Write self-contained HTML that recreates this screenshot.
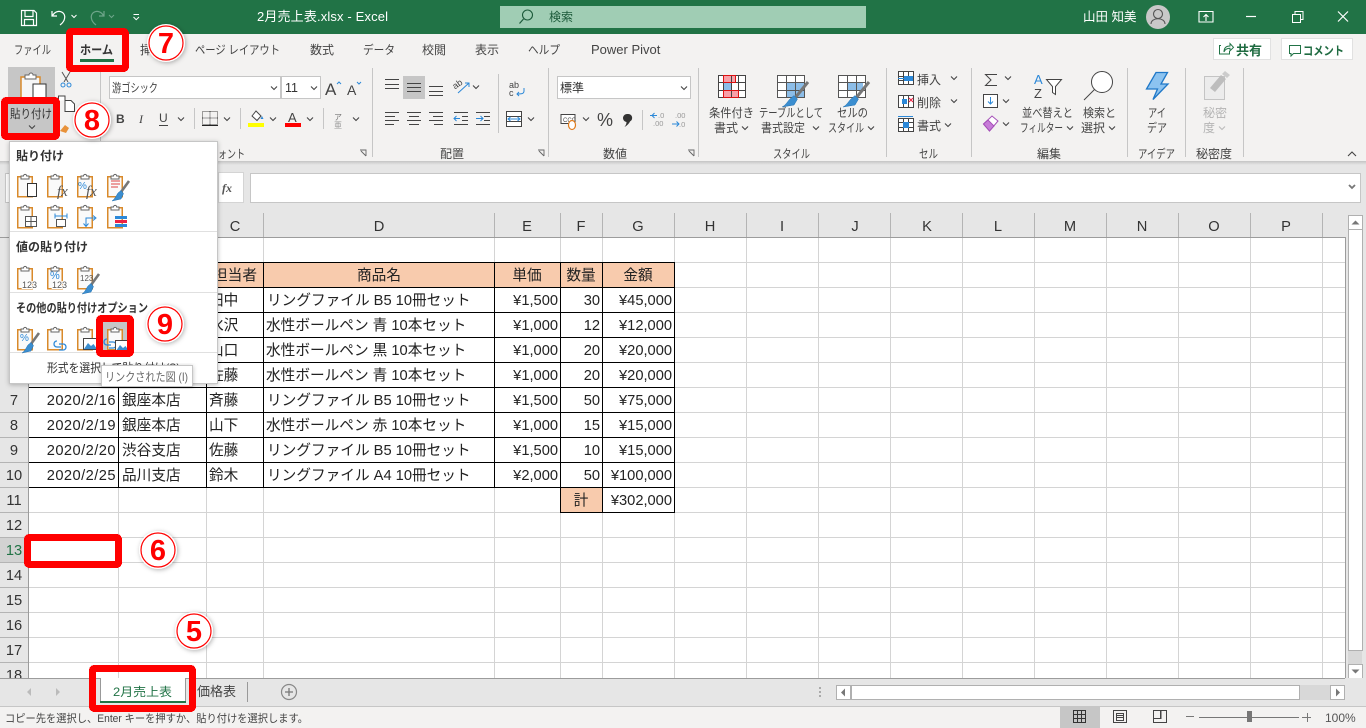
<!DOCTYPE html>
<html lang="ja"><head><meta charset="utf-8"><title>2月売上表.xlsx - Excel</title>
<style>
html,body{margin:0;padding:0;width:1366px;height:728px;overflow:hidden;background:#fff}
svg{display:block;font-family:"Liberation Sans","Noto Sans CJK JP",sans-serif}
.c{shape-rendering:crispEdges}
.r{font-size:12px;fill:#444}
.d{font-size:14.67px;fill:#222}
.h{font-size:14.67px;fill:#333;text-anchor:middle}
.m{text-anchor:middle}
.e{text-anchor:end}
.dt{letter-spacing:.45px}
.b{font-weight:700;font-size:12px;fill:#333}
.n{font-weight:700;font-size:29px;fill:#f00;text-anchor:middle;font-family:"Liberation Sans",sans-serif}
</style></head><body>
<svg width="1366" height="728" viewBox="0 0 1366 728" xmlns="http://www.w3.org/2000/svg">
<defs>
<filter id="sh" x="-30%" y="-30%" width="160%" height="160%"><feDropShadow dx="1" dy="1" stdDeviation="2.5" flood-color="#000" flood-opacity=".3"/></filter>
<filter id="ms" x="-10%" y="-10%" width="120%" height="120%"><feDropShadow dx="0" dy="1" stdDeviation="2.5" flood-color="#000" flood-opacity=".25"/></filter>
<linearGradient id="rs" x1="0" y1="0" x2="0" y2="1"><stop offset="0" stop-color="#c4c4c4"/><stop offset="1" stop-color="#e6e6e6"/></linearGradient>
<path id="ch" d="M-3-1.500 0 1.500 3-1.500" fill="none" stroke="#444" stroke-width="1.100"/>
<path id="lg" d="M-3-1.500 0 1.500 3-1.500" fill="none" stroke="#bbb" stroke-width="1.100"/>
<g id="cb"><rect x=".75" y="3.750" width="14.500" height="20" fill="#fafafa" stroke="#d98a2b" stroke-width="1.500"/><path d="M4 6V3h2.500a1.600 1.600 0 0 1 3.200 0H12v3z" fill="#fff" stroke="#666"/></g>
<g id="br"><path d="M13-6 5 5" stroke="#777" stroke-width="2.600" fill="none"/><path d="M2 6 5 3.500 7.500 6.500 5 12-4 14C-1 12 0 9 2 6z" fill="#3b8ed0" stroke="#1f6fb0" stroke-width=".5"/></g>
<g id="bl"><path d="M20-14 7 2" stroke="#777" stroke-width="3" fill="none"/><path d="M2 3 6-.5 9.500 3 6 9-6 11C-2 9 -1 6 2 3z" fill="#3b8ed0" stroke="#1f6fb0" stroke-width=".5"/></g>
<g id="pic"><rect x=".5" y=".5" width="14" height="11" fill="#fff" stroke="#444"/><path d="M1 11 5 5 8 8 10.500 6 14 11z" fill="#3b8ed0"/></g>
<g id="lk"><path d="M3 0C-1 0-1 6 3 6H7M5 9h4c4 0 4-6 0-6H5" fill="none" stroke="#2b88d8" stroke-width="1.300"/></g>
<g id="nm"><circle r="19" fill="#fff" filter="url(#sh)"/><circle r="17" fill="none" stroke="#f00" stroke-width="1.200"/></g>
</defs>

<!-- sheet -->
<rect width="1366" height="728" fill="#fff"/>
<path class="c" d="M28 262.500H1345M28 287.500H1345M28 312.500H1345M28 337.500H1345M28 362.500H1345M28 387.500H1345M28 412.500H1345M28 437.500H1345M28 462.500H1345M28 487.500H1345M28 512.500H1345M28 537.500H1345M28 562.500H1345M28 587.500H1345M28 612.500H1345M28 637.500H1345M28 662.500H1345M118.500 237V680M206.500 237V680M263.500 237V680M494.500 237V680M560.500 237V680M602.500 237V680M674.500 237V680M746.500 237V680M818.500 237V680M890.500 237V680M962.500 237V680M1034.500 237V680M1106.500 237V680M1178.500 237V680M1250.500 237V680M1322.500 237V680" stroke="#d4d4d4" fill="none"/>
<rect class="c" x="28" y="262" width="647" height="25" fill="#f8cbad"/>
<rect class="c" x="560" y="487" width="42" height="25" fill="#f8cbad"/>
<path class="c" d="M28 262.500H674.500M28 287.500H674.500M28 312.500H674.500M28 337.500H674.500M28 362.500H674.500M28 387.500H674.500M28 412.500H674.500M28 437.500H674.500M28 462.500H674.500M28 487.500H674.500M560 512.500H675M118.500 262V487M206.500 262V487M263.500 262V487M494.500 262V487M560.500 262V512M602.500 262V512M674.500 262V512" stroke="#000" fill="none"/>

<g class="d">
<text class="m" x="235" y="280">担当者</text><text class="m" x="379" y="280">商品名</text><text class="m" x="527" y="280">単価</text><text class="m" x="581" y="280">数量</text><text class="m" x="638" y="280">金額</text>
<text x="209" y="305">田中</text><text x="267" y="305">リングファイル B5 10冊セット</text><text class="e" x="558" y="305">¥1,500</text><text class="e" x="600" y="305">30</text><text class="e" x="672" y="305">¥45,000</text>
<text x="209" y="330">水沢</text><text x="266" y="330">水性ボールペン 青 10本セット</text><text class="e" x="558" y="330">¥1,000</text><text class="e" x="600" y="330">12</text><text class="e" x="672" y="330">¥12,000</text>
<text x="209" y="355">山口</text><text x="266" y="355">水性ボールペン 黒 10本セット</text><text class="e" x="558" y="355">¥1,000</text><text class="e" x="600" y="355">20</text><text class="e" x="672" y="355">¥20,000</text>
<text x="209" y="380">佐藤</text><text x="266" y="380">水性ボールペン 青 10本セット</text><text class="e" x="558" y="380">¥1,000</text><text class="e" x="600" y="380">20</text><text class="e" x="672" y="380">¥20,000</text>
<text class="e dt" x="116" y="405">2020/2/16</text><text x="122" y="405">銀座本店</text><text x="209" y="405">斉藤</text><text x="267" y="405">リングファイル B5 10冊セット</text><text class="e" x="558" y="405">¥1,500</text><text class="e" x="600" y="405">50</text><text class="e" x="672" y="405">¥75,000</text>
<text class="e dt" x="116" y="430">2020/2/19</text><text x="122" y="430">銀座本店</text><text x="209" y="430">山下</text><text x="266" y="430">水性ボールペン 赤 10本セット</text><text class="e" x="558" y="430">¥1,000</text><text class="e" x="600" y="430">15</text><text class="e" x="672" y="430">¥15,000</text>
<text class="e dt" x="116" y="455">2020/2/20</text><text x="122" y="455">渋谷支店</text><text x="209" y="455">佐藤</text><text x="267" y="455">リングファイル B5 10冊セット</text><text class="e" x="558" y="455">¥1,500</text><text class="e" x="600" y="455">10</text><text class="e" x="672" y="455">¥15,000</text>
<text class="e dt" x="116" y="480">2020/2/25</text><text x="122" y="480">品川支店</text><text x="209" y="480">鈴木</text><text x="267" y="480">リングファイル A4 10冊セット</text><text class="e" x="558" y="480">¥2,000</text><text class="e" x="600" y="480">50</text><text class="e" x="672" y="480">¥100,000</text>
<text class="m" x="581" y="505">計</text><text class="e" x="672" y="505">¥302,000</text>
</g>

<!-- headers -->
<rect class="c" x="0" y="161" width="1366" height="76" fill="#e6e6e6"/>
<rect class="c" x="1345" y="237" width="21" height="443" fill="#e6e6e6"/>
<rect class="c" x="0" y="237" width="28" height="443" fill="#e6e6e6"/>
<rect class="c" x="0" y="537" width="28" height="25" fill="#d2d2d2"/>
<path class="c" d="M0 412.500H28M0 437.500H28M0 462.500H28M0 487.500H28M0 512.500H28M0 537.500H28M0 562.500H28M0 587.500H28M0 612.500H28M0 637.500H28M0 662.500H28M206.500 213V237M263.500 213V237M494.500 213V237M560.500 213V237M602.500 213V237M674.500 213V237M746.500 213V237M818.500 213V237M890.500 213V237M962.500 213V237M1034.500 213V237M1106.500 213V237M1178.500 213V237M1250.500 213V237M1322.500 213V237" stroke="#b4b4b4" fill="none"/>
<path class="c" d="M0 237.500H1345.500V680M28.500 237V680" stroke="#9c9c9c" fill="none"/>
<g class="h">
<text x="235" y="231">C</text><text x="379" y="231">D</text><text x="527" y="231">E</text><text x="581" y="231">F</text><text x="638" y="231">G</text><text x="710" y="231">H</text><text x="782" y="231">I</text><text x="855" y="231">J</text><text x="927" y="231">K</text><text x="998" y="231">L</text><text x="1070" y="231">M</text><text x="1142" y="231">N</text><text x="1214" y="231">O</text><text x="1286" y="231">P</text>
<text x="14" y="405">7</text><text x="14" y="430">8</text><text x="14" y="455">9</text><text x="14" y="480">10</text><text x="14" y="505">11</text><text x="14" y="530">12</text><text x="14" y="555" style="fill:#217346">13</text><text x="14" y="580">14</text><text x="14" y="605">15</text><text x="14" y="630">16</text><text x="14" y="655">17</text><text x="14" y="680">18</text>
</g>

<!-- vertical scrollbar -->
<rect class="c" x="1348" y="650" width="14" height="14" fill="#d8d8d8"/>
<rect class="c" x="1348.500" y="229.500" width="14" height="421" fill="#fff" stroke="#b0b0b0"/>
<rect class="c" x="1348.500" y="215.500" width="14" height="14" fill="#fff" stroke="#b0b0b0"/>
<rect class="c" x="1348.500" y="664.500" width="14" height="14" fill="#fff" stroke="#b0b0b0"/>
<path d="M1355.500 220.500 1351.500 224.500H1359.500zM1355.500 673.500 1351.500 669.500H1359.500z" fill="#777"/>

<!-- formula bar -->
<rect class="c" x="5.500" y="173.500" width="211" height="29" fill="#fff" stroke="#c6c6c6"/>
<rect class="c" x="218.500" y="172.500" width="25" height="30" fill="#fff" stroke="#d4d4d4"/>
<text x="222" y="192" style="font:italic 700 12px 'Liberation Serif',serif;fill:#555">fx</text>
<rect class="c" x="250.500" y="173.500" width="1110" height="29" fill="#fff" stroke="#c6c6c6"/>
<path d="M1349 185l3 3 3-3" fill="none" stroke="#777" stroke-width="1.800"/>

<!-- title bar -->
<rect class="c" width="1366" height="34" fill="#217346"/>
<g fill="none" stroke="#fff" stroke-width="1.200">
<path d="M21.500 10.500H34L36.500 13V25.500H21.500zM25 10.500V16.500H33V10.500M24.500 25.500V19.500H33.500V25.500"/>
<path d="M52 11V16H57M52.500 16C54 12 59 10 62.500 12.500C66 15 65.500 21 60 25"/>
<path d="M71.500 15l2.500 2.500L76.500 15" stroke-width="1"/>
<path d="M133.500 14.500H139M133.500 17l2.700 2.700L139 17" stroke-width="1"/>
<path d="M1199 11.500h14v10.500h-14zM1206 21v-6M1203.500 17l2.500-2.500 2.500 2.500" stroke-width="1.100"/>
<path d="M1246 16.500h10"/>
<path d="M1292.500 14.500h8v8h-8zM1295 14v-2.500h8v8h-2.500" stroke-width="1"/>
<path d="M1338 11.500 1348 21.500M1348 11.500 1338 21.500"/>
</g>
<g fill="none" stroke="#6ea58a" stroke-width="1.200"><path d="M104 11V16H99M103.500 16C102 12 97 10 93.500 12.500C90 15 90.500 21 96 25"/><path d="M109 15l2.500 2.500L114 15" stroke-width="1"/></g>
<text x="257" y="21" textLength="131" style="font-size:13px;fill:#fff">2月売上表.xlsx  -  Excel</text>
<rect class="c" x="500" y="6" width="366" height="22" fill="#a0cdb4"/>
<circle cx="527.500" cy="15" r="5" fill="none" stroke="#1c5a3a" stroke-width="1.100"/><path d="M523.500 19 519.500 23.500" stroke="#1c5a3a" stroke-width="1.200"/>
<text x="549" y="21" style="font-size:12px;fill:#1c5a3a">検索</text>
<text x="1083" y="21" style="font-size:12.500px;fill:#fff">山田 知美</text>
<circle cx="1158" cy="17" r="12" fill="#c8c8c8"/><circle cx="1158" cy="14" r="4.500" fill="none" stroke="#555" stroke-width="1.100"/><path d="M1151 24c0-7 14-7 14 0" fill="none" stroke="#555" stroke-width="1.100"/>

<!-- ribbon -->
<rect class="c" y="34" width="1366" height="127" fill="#f3f2f1"/>
<rect class="c" y="161" width="1366" height="4" fill="url(#rs)"/>
<g class="r">
<text x="14" y="54" textLength="37" lengthAdjust="spacingAndGlyphs">ファイル</text>
<text x="80" y="54" textLength="33" lengthAdjust="spacingAndGlyphs" style="font-weight:700;fill:#333">ホーム</text>
<text x="140" y="54">挿入</text>
<text x="195" y="54" textLength="85" lengthAdjust="spacingAndGlyphs">ページ レイアウト</text>
<text x="310" y="54">数式</text>
<text x="363" y="54" textLength="32" lengthAdjust="spacingAndGlyphs">データ</text>
<text x="422" y="54">校閲</text><text x="475" y="54">表示</text>
<text x="528" y="54" textLength="32" lengthAdjust="spacingAndGlyphs">ヘルプ</text>
<text x="591" y="54" style="font-size:13px">Power Pivot</text>
</g>
<rect class="c" x="80" y="59" width="34" height="3" fill="#217346"/>

<rect class="c" x="1213.500" y="38.500" width="57" height="21" fill="#fff" stroke="#e1e1e1"/>
<rect class="c" x="1281.500" y="38.500" width="71" height="21" fill="#fff" stroke="#e1e1e1"/>
<path d="M1221 45.500h-1.500v8.500h10v-3M1224 52c0-4 2-6 6-6v-2.500l3.500 3.800-3.500 3.500v-2.500c-3 0-5 1-6 3.700z" fill="none" stroke="#217346"/>
<path d="M1289.500 45.500h11v8h-7l-2.500 2.500v-2.500h-1.500z" fill="none" stroke="#217346"/>
<text x="1236" y="55" style="font-weight:700;font-size:13px;fill:#1f6b41">共有</text>
<text x="1303" y="55" textLength="41" lengthAdjust="spacingAndGlyphs" style="font-weight:700;font-size:12px;fill:#1f6b41">コメント</text>

<!-- ribbon separators -->
<path class="c" d="M100.500 68V157M372.500 68V157M548.500 68V157M698.500 68V157M886.500 68V157M971.500 68V157M1127.500 68V157M1185.500 68V157M1243.500 68V157M498.500 74V133M642.500 110V130M194.500 108V129M240.500 108V129M323.500 108V129" stroke="#c6c6c6" fill="none"/>

<!-- clipboard group -->
<rect class="c" x="8" y="67" width="47" height="32" fill="#c6c6c6"/>
<rect x="21" y="77" width="19" height="24" fill="#f6f6f6" stroke="#d98a2b" stroke-width="1.500"/>
<path d="M25 79V75h4a2 2 0 0 1 4 0h3v4z" fill="#fff" stroke="#666"/>
<rect x="33" y="84" width="13" height="16" fill="#fff" stroke="#333"/>
<path d="M62 72 68 82M70 72 64 82" stroke="#555" fill="none"/><circle cx="63" cy="85" r="2" fill="none" stroke="#2b88d8"/><circle cx="69" cy="85" r="2" fill="none" stroke="#2b88d8"/>
<path d="M58.500 101V96h6.500v4M65 100.500h6l3.500 3.500v7.500H65z" fill="#fff" stroke="#444"/>
<path d="M60 131l5-6 4 3-3 5z" fill="#e8923a"/>
<rect class="c" x="8" y="104" width="45" height="29" fill="#c6c6c6"/>
<text x="10" y="118" textLength="42" lengthAdjust="spacingAndGlyphs" style="font-size:12px;fill:#333">貼り付け</text>
<use href="#ch" x="32" y="127"/>

<!-- font -->
<rect class="c" x="109.500" y="76.500" width="171" height="22" fill="#fff" stroke="#c6c6c6"/>
<rect class="c" x="281.500" y="76.500" width="39" height="22" fill="#fff" stroke="#c6c6c6"/>
<text x="112" y="92" textLength="46" lengthAdjust="spacingAndGlyphs" class="r">游ゴシック</text>
<text x="285" y="92" style="font-size:12.500px;fill:#333">11</text>
<use href="#ch" x="274" y="88"/><use href="#ch" x="314" y="88"/>
<text x="325" y="95" style="font-size:17px;fill:#444">A</text><path d="M337 84l2-2 2 2" fill="none" stroke="#2b88d8"/>
<text x="347" y="95" style="font-size:14px;fill:#444">A</text><path d="M357 82l2 2 2-2" fill="none" stroke="#2b88d8"/>
<text x="116" y="123" style="font-size:12px;font-weight:700;fill:#444">B</text>
<text x="139" y="123" style="font:italic 12px 'Liberation Serif',serif;fill:#444">I</text>
<text x="159" y="122" style="font-size:12px;fill:#444">U</text><path class="c" d="M159 125.500h9" stroke="#444"/>
<use href="#ch" x="181" y="119"/>
<path d="M202.500 111.500h15v13h-15zM210 111.500v13M202.500 118h15" fill="none" stroke="#444" stroke-dasharray="1 1"/><path class="c" d="M202 125.500h16" stroke="#222"/>
<use href="#ch" x="227" y="119"/>
<path d="M252 116l4-5 5 5-4 4.500z" fill="#fff" stroke="#444"/><path d="M262 116l1.500 3h-3z" fill="#2b88d8"/><rect class="c" x="248" y="123" width="16" height="4" fill="#ff0"/>
<use href="#ch" x="273" y="119"/>
<text x="288" y="122" style="font-size:13px;fill:#444">A</text><rect class="c" x="285" y="123" width="16" height="4" fill="#f00"/>
<use href="#ch" x="310" y="119"/>
<text x="334" y="120" style="font-size:8px;fill:#777">ア</text><text x="334" y="128" style="font-size:8px;fill:#999">亜</text>
<use href="#ch" x="356" y="119"/>
<text x="218" y="158" class="r" textLength="27" lengthAdjust="spacingAndGlyphs">ォント</text>
<path d="M360 150h6v6M361 151l5 5" fill="none" stroke="#666" stroke-width=".9"/>

<!-- alignment -->
<rect class="c" x="403" y="76" width="22" height="23" fill="#c6c6c6"/>
<path class="c" d="M385 79.500H399M385 84.500H399M385 88.500H399M407 83.500H421M407 87.500H421M407 91.500H421M429 86.500H443M429 91.500H443M429 95.500H443" stroke="#444" fill="none"/>
<text x="453" y="87" style="font-size:9px;fill:#444" transform="rotate(-35 458 85)">ab</text><path d="M458 93 469 83M465 83h4v4" fill="none" stroke="#2b88d8"/>
<use href="#ch" x="476" y="87"/>
<path d="M385 112.500H399M385 116.500H395M385 120.500H399M385 124.500H394M407 112.500H421M409 116.500H419M407 120.500H421M409 124.500H419M429 112.500H443M433 116.500H443M429 120.500H443M434 124.500H443M454 112.500H468M462 116.500H468M462 120.500H468M454 124.500H468M476 112.500H490M484 116.500H490M484 120.500H490M476 124.500H490" stroke="#444" fill="none" class="c"/>
<path d="M460 118.500h-6m2.500-2.500-2.500 2.500 2.500 2.500M476 118.500h7m-2.500-2.500 2.500 2.500-2.500 2.500" fill="none" stroke="#2b88d8"/>
<text x="509" y="88" style="font-size:9px;fill:#444">ab</text><text x="509" y="96" style="font-size:9px;fill:#444">c</text><path d="M524 88v3c0 3-3 3-7 3m2-2-2 2 2 2" fill="none" stroke="#2b88d8"/>
<path class="c" d="M506.500 111.500h15v15h-15zM506.500 116.500h15M506.500 121.500h15" fill="#fff" stroke="#444"/><path d="M508 119h12m-9.500-2-2.500 2 2.500 2m7-4 2.500 2-2.500 2" fill="none" stroke="#2b88d8"/>
<use href="#ch" x="531" y="119"/>
<text x="440" y="158" class="r">配置</text>
<path d="M538 150h6v6M539 151l5 5" fill="none" stroke="#666" stroke-width=".9"/>

<!-- number -->
<rect class="c" x="557.500" y="76.500" width="133" height="22" fill="#fff" stroke="#c6c6c6"/>
<text x="560" y="92" class="r" style="fill:#333">標準</text>
<use href="#ch" x="684" y="88"/>
<rect x="561" y="114.500" width="14" height="9" fill="#fff" stroke="#444"/><text x="563" y="122" style="font-size:6px;fill:#444">CCC</text><ellipse cx="572" cy="125" rx="3.500" ry="4.500" fill="#fff" stroke="#e07b1a" stroke-width="1.200"/>
<use href="#ch" x="586" y="119"/>
<text x="597" y="126" style="font-size:18px;fill:#444">%</text>
<path d="M627.500 114a4 4 0 0 1 2.500 7.500c-1 2-2.500 3.800-5.500 5.500 1.500-2 2-3.500 2-5a4 4 0 0 1 1-8z" fill="#333"/>
<text x="658" y="118" style="font-size:7.500px;fill:#999">.0</text><text x="653" y="126" style="font-size:7.500px;fill:#999">.00</text><path d="M650 115.500h7m-2.500-2.500-2.500 2.500 2.500 2.500" fill="none" stroke="#2b88d8"/>
<text x="675" y="118" style="font-size:7.500px;fill:#999">.00</text><text x="679" y="127" style="font-size:7.500px;fill:#999">.0</text><path d="M672 124h7m-2.500-2.500 2.500 2.500-2.500 2.500" fill="none" stroke="#2b88d8"/>
<text x="603" y="158" class="r">数値</text>
<path d="M688 150h6v6M689 151l5 5" fill="none" stroke="#666" stroke-width=".9"/>

<!-- styles -->
<rect class="c" x="718" y="75" width="28" height="22" fill="#fff"/>
<rect class="c" x="723" y="75" width="12" height="7" fill="#f8a0a8"/><rect class="c" x="723" y="82" width="8" height="8" fill="#8cbde8"/><rect class="c" x="723" y="90" width="15" height="7" fill="#f8a0a8"/>
<path class="c" d="M718.500 75.500h27v22h-27zM718.500 82.500h27M718.500 90.500h27M723.500 75.500v22M731.500 75.500v22M738.500 75.500v22" fill="none" stroke="#444"/>
<path class="c" d="M723.500 75.500h12v7h-12zM723.500 90.500h15v7h-15z" fill="none" stroke="#d11"/>
<rect class="c" x="777" y="75" width="28" height="22" fill="#fff"/><rect class="c" x="786" y="82" width="19" height="15" fill="#8cbde8"/>
<path class="c" d="M777.500 75.500h27v22h-27zM777.500 82.500h27M777.500 90.500h27M786.500 75.500v22M795.500 75.500v22" fill="none" stroke="#555"/>
<g transform="translate(788,96)"><use href="#bl"/></g>
<rect class="c" x="838" y="75" width="28" height="22" fill="#fff"/><rect class="c" x="847" y="82" width="16" height="9" fill="#8cbde8"/>
<path class="c" d="M838.500 75.500h27v22h-27zM838.500 82.500h27M838.500 90.500h27M847.500 75.500v22M856.500 75.500v22" fill="none" stroke="#555"/>
<g transform="translate(849,96)"><use href="#bl"/></g>
<g class="r">
<text x="709" y="117" textLength="45" lengthAdjust="spacingAndGlyphs">条件付き</text>
<text x="714" y="132">書式</text>
<text x="759" y="117" textLength="64" lengthAdjust="spacingAndGlyphs">テーブルとして</text>
<text x="761" y="132" textLength="44" lengthAdjust="spacingAndGlyphs">書式設定</text>
<text x="837" y="117" textLength="31" lengthAdjust="spacingAndGlyphs">セルの</text>
<text x="828" y="132" textLength="36" lengthAdjust="spacingAndGlyphs">スタイル</text>
<text x="773" y="158" textLength="37" lengthAdjust="spacingAndGlyphs">スタイル</text>
<text x="919" y="158" textLength="19" lengthAdjust="spacingAndGlyphs">セル</text>
<text x="1037" y="158">編集</text>
<text x="1138" y="158" textLength="37" lengthAdjust="spacingAndGlyphs">アイデア</text>
<text x="1196" y="158" textLength="36" lengthAdjust="spacingAndGlyphs">秘密度</text>
</g>
<use href="#ch" x="745" y="128"/><use href="#ch" x="816" y="128"/><use href="#ch" x="871" y="128"/>

<!-- cells -->
<path class="c" d="M898.500 71.500h15v13h-15zM898.500 76.500h15M898.500 80.500h15M903.500 71.500v13M908.500 71.500v13M898.500 95.500h15v12h-15zM903.500 95.500v12M908.500 95.500v12M898.500 118.500h15v13h-15zM898.500 122.500h15M898.500 127.500h15M903.500 118.500v13M908.500 118.500v13" fill="#fff" stroke="#444"/>
<rect class="c" x="904" y="76" width="9" height="5" fill="#2b88d8"/><path d="M904 78.500h-6" stroke="#2b88d8"/>
<rect class="c" x="902" y="99" width="5" height="5" fill="#2b88d8"/><path d="M909 98l4 4M913 98l-4 4" stroke="#e24" fill="none"/>
<rect class="c" x="903" y="122" width="6" height="6" fill="#2b88d8"/><path class="c" d="M898 116.500h15" stroke="#2b88d8"/>
<g class="r"><text x="917" y="84">挿入</text><text x="917" y="107">削除</text><text x="917" y="130">書式</text></g>
<use href="#ch" x="954" y="78"/><use href="#ch" x="954" y="101"/><use href="#ch" x="948" y="125"/>

<!-- editing -->
<path d="M997 74.500H985.500L991 80 985.500 85.500H997" fill="none" stroke="#444"/>
<use href="#ch" x="1008" y="78"/>
<rect class="c" x="983.500" y="94.500" width="14" height="13" fill="#fff" stroke="#444"/><path d="M990.500 97v7m-2.500-2.500 2.500 2.500 2.500-2.500" fill="none" stroke="#2b88d8"/>
<use href="#ch" x="1006" y="101"/>
<path d="M983.500 124 992 116 998 121 989.500 131z" fill="#fff" stroke="#a54fb8"/><path d="M983.500 124 988 120 994 126 989.500 131z" fill="#c77cd8" stroke="#a54fb8"/>
<use href="#ch" x="1006" y="124"/>
<text x="1034" y="84" style="font-size:13px;fill:#2b88d8">A</text><text x="1034" y="98" style="font-size:13px;fill:#444">Z</text>
<path d="M1046.500 79.500h15l-6 7v8l-3-2v-6z" fill="#fff" stroke="#444"/>
<circle cx="1102" cy="82" r="10.500" fill="#fff" stroke="#444"/><path d="M1094.500 89.500 1084 100" stroke="#444" fill="none"/>
<g class="r">
<text x="1022" y="117" textLength="51" lengthAdjust="spacingAndGlyphs">並べ替えと</text>
<text x="1020" y="132" textLength="43" lengthAdjust="spacingAndGlyphs">フィルター</text>
<text x="1083" y="117" textLength="33" lengthAdjust="spacingAndGlyphs">検索と</text>
<text x="1081" y="132">選択</text>
<text x="1148" y="117" textLength="18" lengthAdjust="spacingAndGlyphs">アイ</text>
<text x="1147" y="132" textLength="20" lengthAdjust="spacingAndGlyphs">デア</text>
</g>
<use href="#ch" x="1070" y="128"/><use href="#ch" x="1112" y="128"/>

<!-- ideas -->
<path d="M1156 72.500h11.500L1161 84h7L1153 99.500 1157.500 89H1146.500z" fill="#8cc3f0" stroke="#1f78c8" stroke-width="1.300"/>

<!-- sensitivity -->
<rect x="1204.500" y="76.500" width="20" height="23" fill="#ececec" stroke="#c4c4c4"/>
<path d="M1210 88 1221 75l5 4-11 13z" fill="#bdbdbd"/><path d="M1222 74l3-3 5 4-3 3z" fill="#ccc"/>
<g style="font-size:12px;fill:#b4b4b4"><text x="1203" y="117">秘密</text><text x="1203" y="132">度</text></g>
<use href="#lg" x="1222" y="128"/>
<path d="M1348 156l4-4 4 4" fill="none" stroke="#444" stroke-width="1.100"/>

<!-- sheet tabs -->
<rect class="c" y="678" width="1366" height="28" fill="#e6e6e6"/>
<rect class="c" y="678" width="1345" height="1" fill="#9c9c9c"/>
<rect class="c" y="706" width="1366" height="1" fill="#c6c6c6"/>
<path d="M27 692l4-4v8zM60 692l-4-4v8z" fill="#bbb"/>
<rect class="c" x="100" y="678" width="86" height="25" fill="#fff"/>
<path class="c" d="M100.500 678v25M185.500 678v25" stroke="#999"/>
<rect class="c" x="100" y="701" width="86" height="2" fill="#217346"/>
<text x="113" y="696" textLength="59" lengthAdjust="spacingAndGlyphs" style="font-size:12px;fill:#217346">2月売上表</text>
<text x="197" y="696" style="font-size:13px;fill:#444">価格表</text>
<path class="c" d="M247.500 682v20" stroke="#999"/>
<circle cx="289" cy="692" r="7.500" fill="none" stroke="#888" stroke-width="1.200"/><path d="M285 692h8M289 688v8" stroke="#777" stroke-width="1.300"/>
<path class="c" d="M819 687h2v2h-2zM819 691h2v2h-2zM819 695h2v2h-2z" fill="#aaa"/>
<rect class="c" x="1300" y="685" width="30" height="15" fill="#d8d8d8"/>
<rect class="c" x="851.500" y="685.500" width="448" height="14" fill="#fff" stroke="#b0b0b0"/>
<rect class="c" x="836.500" y="685.500" width="14" height="14" fill="#fff" stroke="#b0b0b0"/>
<rect class="c" x="1330.500" y="685.500" width="14" height="14" fill="#fff" stroke="#b0b0b0"/>
<path d="M841 692.500l4-4v8zM1340 692.500l-4-4v8z" fill="#777"/>

<!-- status bar -->
<rect class="c" y="707" width="1366" height="21" fill="#f3f2f1"/>
<text x="5" y="722" textLength="303" lengthAdjust="spacingAndGlyphs" style="font-size:11px;fill:#444">コピー先を選択し、Enter キーを押すか、貼り付けを選択します。</text>
<rect class="c" x="1060" y="707" width="40" height="21" fill="#c6c6c6"/>
<path class="c" d="M1073.500 710.500h12v12h-12zM1077.500 710.500v12M1081.500 710.500v12M1073.500 714.500h12M1073.500 718.500h12" fill="none" stroke="#333"/>
<path class="c" d="M1113.500 710.500h13v12h-13zM1116.500 713.500h7v7h-7zM1116.500 715.500h7M1116.500 717.500h7" fill="none" stroke="#444"/>
<path class="c" d="M1153.500 710.500h13v12h-13zM1153.500 718.500h7.500v-8M1160.500 710.500v8" fill="none" stroke="#444"/>
<path class="c" d="M1186 716.500h8M1199 717.500h100M1302 717.500h9M1307.500 713v9" stroke="#777" fill="none"/>
<rect class="c" x="1247" y="711" width="5" height="11" fill="#777"/>
<text x="1325" y="722" style="font-size:12px;fill:#555">100%</text>

<!-- paste menu -->
<rect class="c" x="9.500" y="141.500" width="208" height="242" fill="#fff" stroke="#c6c6c6" filter="url(#ms)"/>
<rect class="c" x="103" y="321" width="24" height="31" fill="#c6c6c6"/>
<g class="b"><text x="16" y="160">貼り付け</text><text x="16" y="251">値の貼り付け</text><text x="16" y="312" textLength="132" lengthAdjust="spacingAndGlyphs">その他の貼り付けオプション</text></g>
<path class="c" d="M10 231.500H217M10 292.500H217M10 352.500H217" stroke="#e0e0e0"/>

<use href="#cb" x="17" y="173"/><rect x="27.500" y="183.500" width="9" height="13" fill="#fff" stroke="#333"/>
<use href="#cb" x="47" y="173"/><text x="57" y="196" style="font:italic 15px 'Liberation Serif',serif;fill:#555">fx</text>
<use href="#cb" x="77" y="173"/><text x="78" y="189" style="font-size:10px;fill:#2b88d8">%</text><text x="86" y="196" style="font:italic 15px 'Liberation Serif',serif;fill:#555">fx</text>
<use href="#cb" x="107" y="173"/><path d="M111 181h9M111 184h9M111 187h7" stroke="#d44" fill="none"/><g transform="translate(116,187)"><use href="#br"/></g>

<use href="#cb" x="17" y="204"/><path d="M25.500 216.500h11v10h-11zM31 216.500v10M25.500 221.500h11" fill="#fff" stroke="#555"/>
<use href="#cb" x="47" y="204"/><path d="M55 216h12M55 213.500v5M67 213.500v5" stroke="#2b88d8" fill="none"/><path d="M56.500 219.500h9v7h-9z" fill="#fff" stroke="#555"/>
<use href="#cb" x="77" y="204"/><path d="M86 226v-8h9m-2-2.500 3 2.500-3 2.500M83.500 223.500l2.500 3 2.500-3" fill="none" stroke="#2b88d8"/>
<use href="#cb" x="107" y="204"/><rect class="c" x="115" y="216" width="12" height="3" fill="#2b88d8"/><rect class="c" x="115" y="220" width="12" height="3" fill="#e24"/><rect class="c" x="115" y="224" width="12" height="3" fill="#2b88d8"/>

<use href="#cb" x="17" y="265"/><text x="22" y="288" style="font-size:9px;fill:#555;stroke:#fff;stroke-width:2;paint-order:stroke">123</text>
<use href="#cb" x="47" y="265"/><text x="50" y="279" style="font-size:11px;fill:#2b88d8">%</text><text x="52" y="288" style="font-size:9px;fill:#555;stroke:#fff;stroke-width:2;paint-order:stroke">123</text>
<use href="#cb" x="77" y="265"/><text x="80" y="281" style="font-size:8px;fill:#555">123</text><g transform="translate(86,280)"><use href="#br"/></g>

<use href="#cb" x="17" y="326"/><text x="20" y="341" style="font-size:10px;fill:#2b88d8">%</text><g transform="translate(26,339)"><use href="#br"/></g>
<use href="#cb" x="47" y="326"/><g transform="translate(54,341)"><use href="#lk"/></g>
<use href="#cb" x="77" y="326"/><g transform="translate(83,338)"><use href="#pic"/></g>
<use href="#cb" x="107" y="326"/><g transform="translate(104,339)"><use href="#lk"/></g><g transform="translate(115,340)"><use href="#pic"/></g>

<text x="47" y="372" class="r" textLength="133" lengthAdjust="spacingAndGlyphs" style="fill:#333">形式を選択して貼り付け(S)</text>

<!-- tooltip -->
<rect class="c" x="101.500" y="365.500" width="91" height="21" fill="#fff" stroke="#c6c6c6" filter="url(#ms)"/>
<text x="105" y="381" textLength="83" lengthAdjust="spacingAndGlyphs" style="font-size:12px;fill:#666">リンクされた図 (I)</text>

<!-- red highlight boxes -->
<g fill="none" stroke="#f00" stroke-width="7" class="c">
<rect x="69.500" y="31.500" width="56" height="37" rx="2"/>
<rect x="4.500" y="100.500" width="52" height="36" rx="2"/>
<rect x="99.500" y="318.500" width="31" height="35" rx="2"/>
<rect x="27.500" y="537.500" width="91" height="27" rx="2"/>
<rect x="92.500" y="668.500" width="100" height="40" rx="2"/>
</g>
<rect class="c" x="31" y="541" width="84" height="20" fill="#fff"/>

<!-- numbered callouts -->
<use href="#nm" x="166" y="43"/><text class="n" x="166" y="53">7</text>
<use href="#nm" x="92" y="120"/><text class="n" x="92" y="130">8</text>
<use href="#nm" x="165" y="324"/><text class="n" x="165" y="334">9</text>
<use href="#nm" x="158" y="550"/><text class="n" x="158" y="560">6</text>
<use href="#nm" x="194" y="631"/><text class="n" x="194" y="641">5</text>
</svg>
</body></html>
